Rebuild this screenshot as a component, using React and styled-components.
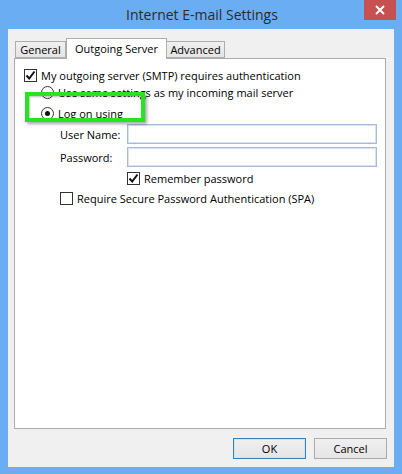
import React from "react";
import styled, { createGlobalStyle } from "styled-components";

const Global = createGlobalStyle`
  html, body {
    margin: 0;
    padding: 0;
    background: #6badf3;
  }
  * {
    box-sizing: border-box;
  }
`;

/* Outer window frame */
const Frame = styled.div`
  width: 402px;
  height: 474px;
  background: #6badf3;
  display: flex;
  flex-direction: column;
  padding: 0 8px 7px 8px;
  font-family: "Open Sans", "Noto Sans", sans-serif;
  font-size: 11px;
  color: #000;
`;

const TitleBar = styled.div`
  height: 29px;
  display: grid;
  grid-template-columns: 1fr auto 1fr;
  align-items: start;
  margin: 0 -2px 0 0;
`;

const Title = styled.div`
  grid-column: 2;
  padding-top: 5px;
  font-size: 14px;
  color: #2b2b2b;
`;

const CloseButton = styled.div`
  grid-column: 3;
  justify-self: end;
  width: 32px;
  height: 20px;
  background: #c75050;
  display: flex;
  align-items: center;
  justify-content: center;
`;

const Client = styled.div`
  flex: 1;
  background: #f0f0f0;
  display: flex;
  flex-direction: column;
  padding: 9px 8px 8px 6px;
`;

const TabStrip = styled.div`
  display: flex;
  align-items: flex-end;
  height: 20px;
  padding-left: 1px;
  position: relative;
  z-index: 1;
`;

const Tab = styled.div`
  height: ${(p) => (p.$active ? "21px" : "17px")};
  margin-bottom: ${(p) => (p.$active ? "-1px" : "0")};
  display: flex;
  align-items: ${(p) => (p.$active ? "flex-start" : "center")};
  padding-top: ${(p) => (p.$active ? "2px" : "0")};
  border: 1px solid #adadad;
  border-bottom: ${(p) => (p.$active ? "none" : "1px solid #adadad")};
  border-left: ${(p) => (p.$last ? "none" : "1px solid #adadad")};
  background: ${(p) =>
    p.$active ? "#fff" : "linear-gradient(#f0f0f0, #e5e5e5)"};
  width: ${(p) => p.$w}px;
  justify-content: center;
  white-space: nowrap;
`;

const Panel = styled.div`
  height: 371px;
  border: 1px solid #adadad;
  background: #fff;
  position: relative;
  padding: 9px 0 0 9px;
  display: flex;
  flex-direction: column;
`;

const Row = styled.label`
  display: flex;
  align-items: center;
  height: ${(p) => p.$h || 20}px;
  margin-left: ${(p) => p.$indent || 0}px;
  margin-top: ${(p) => p.$top || 0}px;
  gap: ${(p) => p.$gap || 4}px;
  white-space: nowrap;
`;

const Box = styled.span`
  width: 13px;
  height: 13px;
  border: 1px solid #333;
  background: #fff;
  display: flex;
  align-items: center;
  justify-content: center;
  flex-shrink: 0;
`;

const Radio = styled.span`
  width: 13px;
  height: 13px;
  border: 1px solid #333;
  border-radius: 50%;
  background: #fff;
  display: flex;
  align-items: center;
  justify-content: center;
  flex-shrink: 0;
  &::after {
    content: "";
    display: ${(p) => (p.$on ? "block" : "none")};
    width: 5px;
    height: 5px;
    border-radius: 50%;
    background: #111;
  }
`;

const FieldRow = styled.div`
  display: flex;
  align-items: center;
  margin-left: 36px;
  margin-top: ${(p) => p.$top || 0}px;
  height: 20px;
`;

const FieldLabel = styled.span`
  width: 67px;
`;

const Input = styled.div`
  width: 250px;
  height: 20px;
  border: 1px solid #a9bbd6;
  box-shadow: inset 0 0 0 1px #d6e2f2;
  background: #fff;
`;

const Highlight = styled.div`
  position: absolute;
  left: 10px;
  top: 33px;
  width: 120px;
  height: 30px;
  border: 4px solid #25e521;
  box-shadow: 2px 2px 3px rgba(0, 0, 0, 0.35),
    inset 1px 1px 2px rgba(0, 0, 0, 0.25);
  pointer-events: none;
`;

const Footer = styled.div`
  display: flex;
  justify-content: flex-end;
  gap: 8px;
  margin-top: 9px;
  margin-right: -1px;
`;

const Button = styled.div`
  width: 73px;
  height: 21px;
  border: 1px solid ${(p) => (p.$default ? "#3c7fb1" : "#acacac")};
  box-shadow: ${(p) => (p.$default ? "inset 0 0 0 1px #cde6f7" : "none")};
  background: linear-gradient(#f0f0f0, #e5e5e5);
  display: flex;
  align-items: center;
  justify-content: center;
`;

const Check = () => (
  <svg width="11" height="11" viewBox="0 0 11 11">
    <path d="M1.5 5.5 L4.2 8.5 L9.5 1.5" fill="none" stroke="#111" strokeWidth="2" />
  </svg>
);

const CloseIcon = () => (
  <svg width="10" height="10" viewBox="0 0 10 10">
    <path d="M1 1 L9 9 M9 1 L1 9" stroke="#fff" strokeWidth="2" />
  </svg>
);

export default function App() {
  return (
    <>
      <Global />
      <Frame>
        <TitleBar>
          <Title>Internet E-mail Settings</Title>
          <CloseButton>
            <CloseIcon />
          </CloseButton>
        </TitleBar>
        <Client>
          <TabStrip>
            <Tab $w={51}>General</Tab>
            <Tab $active $w={101}>Outgoing Server</Tab>
            <Tab $last $w={58}>Advanced</Tab>
          </TabStrip>
          <Panel>
            <Row $h={14}>
              <Box>
                <Check />
              </Box>
              My outgoing server (SMTP) requires authentication
            </Row>
            <Row $indent={17} $top={0}>
              <Radio />
              Use same settings as my incoming mail server
            </Row>
            <Row $indent={17} $top={1}>
              <Radio $on />
              Log on using
            </Row>
            <FieldRow $top={1}>
              <FieldLabel>User Name:</FieldLabel>
              <Input />
            </FieldRow>
            <FieldRow $top={3}>
              <FieldLabel>Password:</FieldLabel>
              <Input />
            </FieldRow>
            <Row $indent={103} $top={1}>
              <Box>
                <Check />
              </Box>
              Remember password
            </Row>
            <Row $indent={36} $top={0}>
              <Box />
              Require Secure Password Authentication (SPA)
            </Row>
            <Highlight />
          </Panel>
          <Footer>
            <Button $default>OK</Button>
            <Button>Cancel</Button>
          </Footer>
        </Client>
      </Frame>
    </>
  );
}
